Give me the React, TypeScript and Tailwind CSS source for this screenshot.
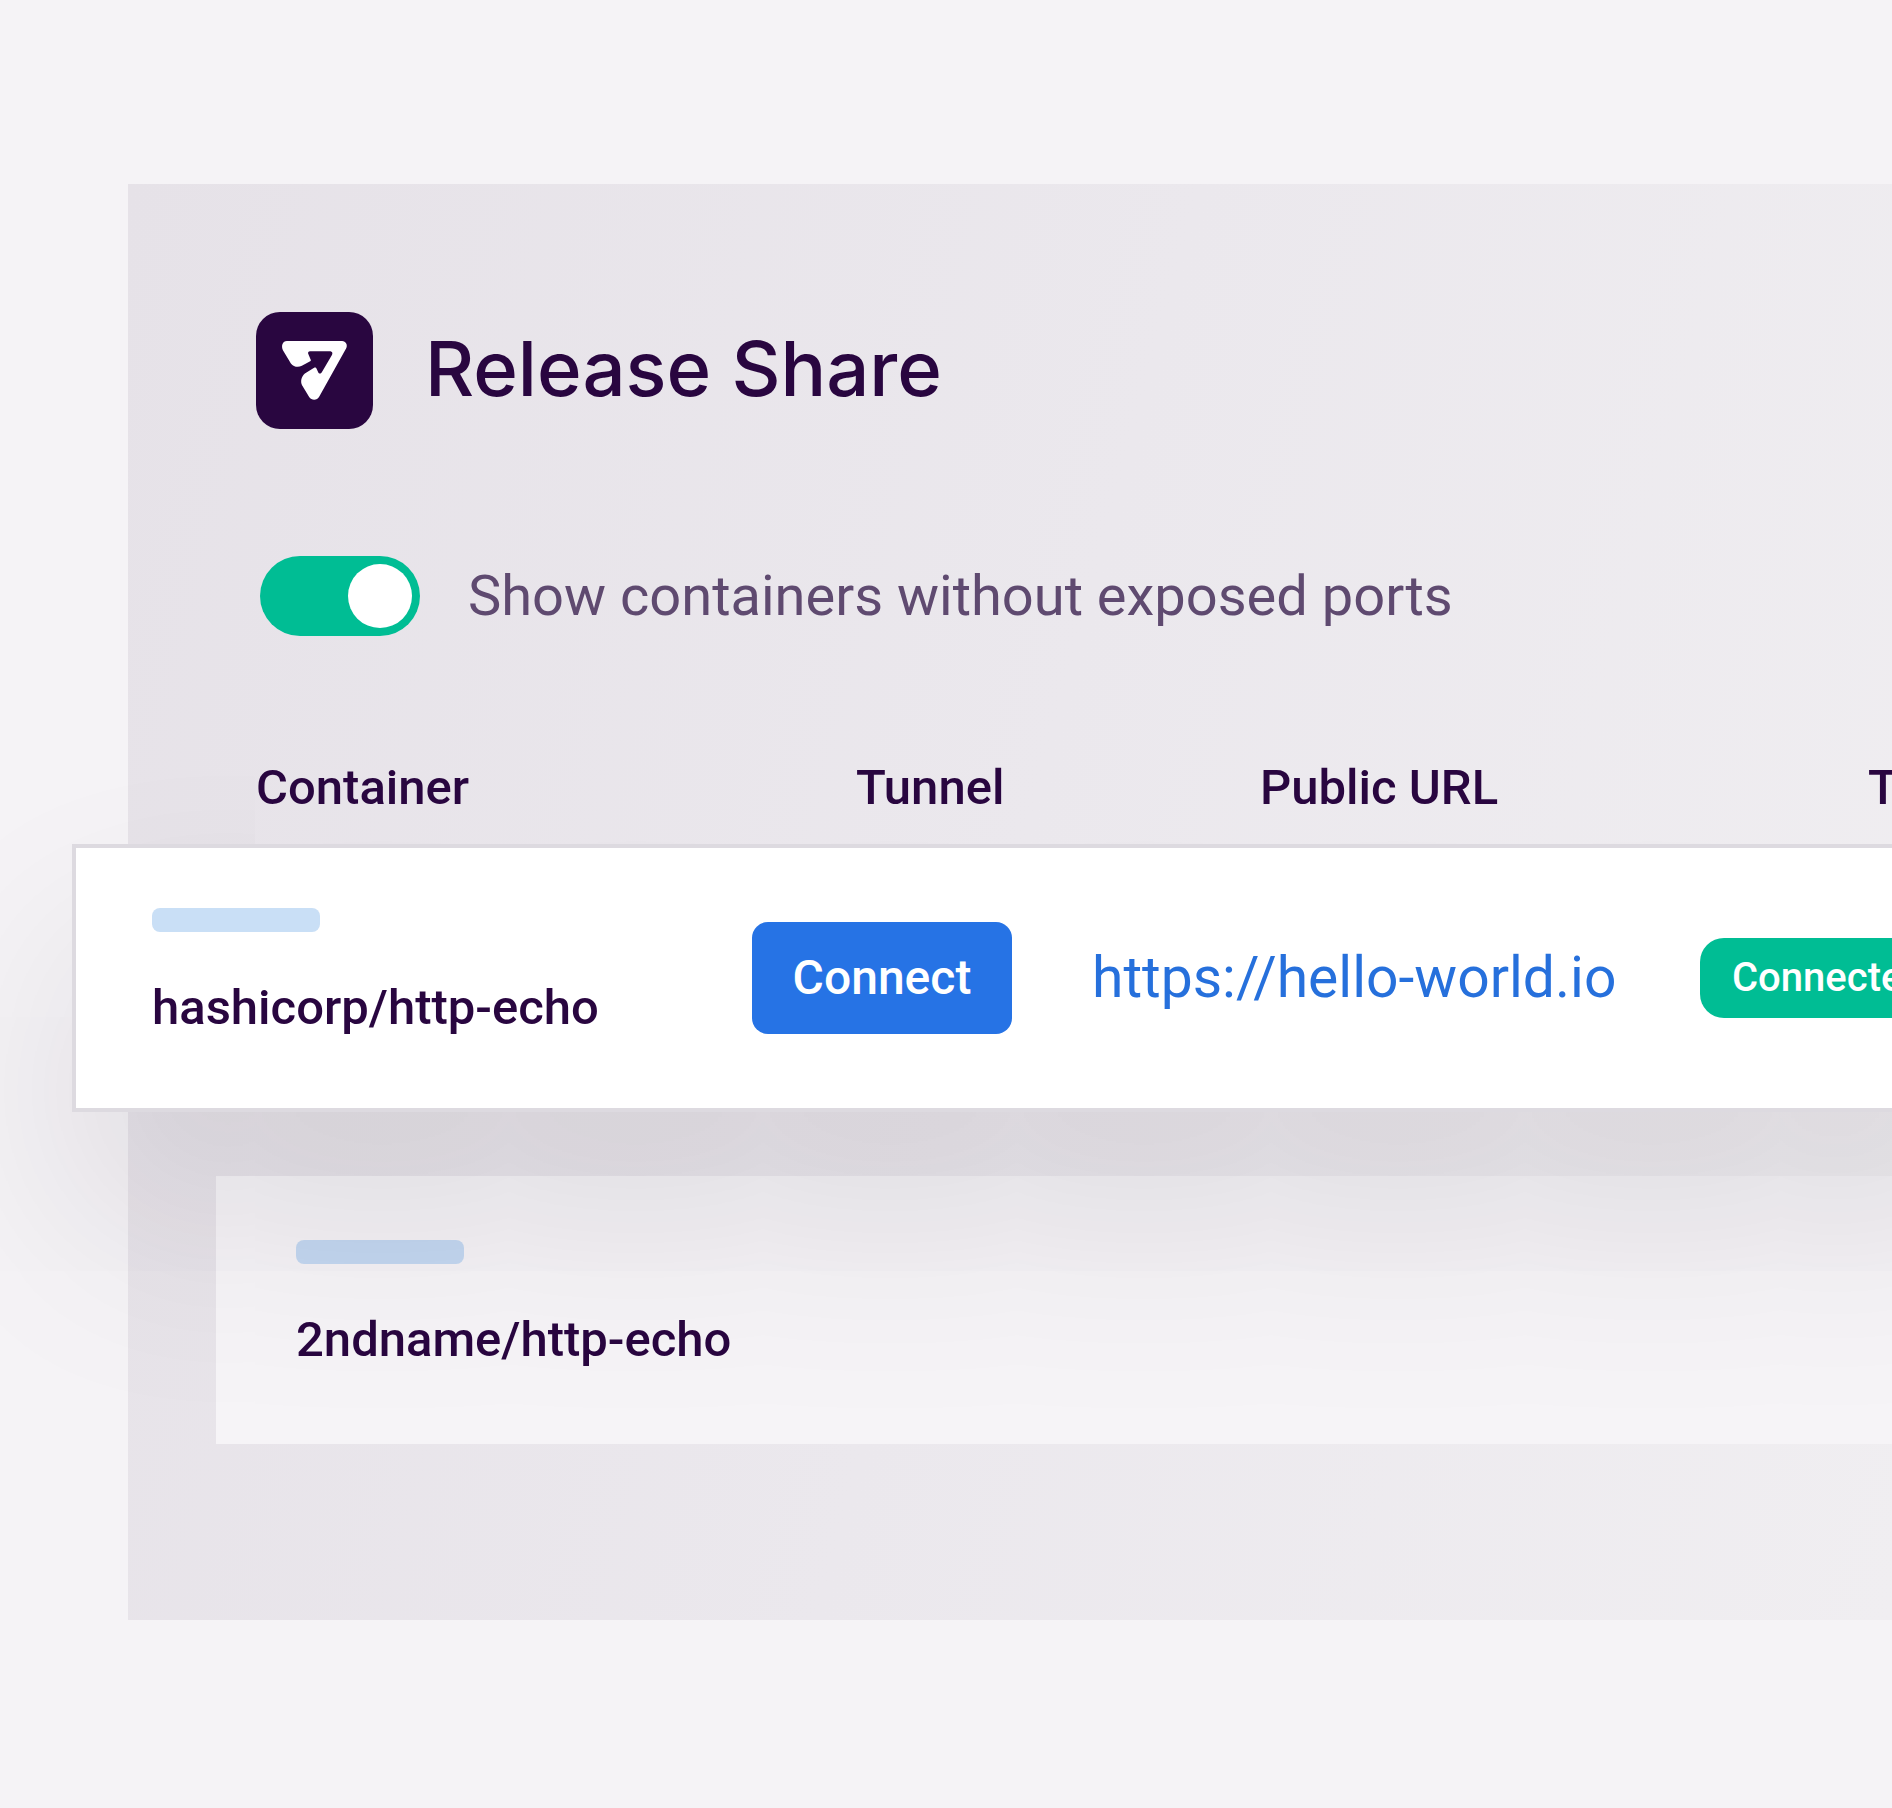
import { useState } from "react";

function Logo() {
  return (
    <svg
      viewBox="48 36 352 352"
      className="size-[117px] shrink-0"
      role="img"
      aria-label="Release logo"
    >
      <rect x="48" y="36" width="352" height="352" rx="72" fill="#290640" />
      <path
        fill="#fff"
        d="M141 123H307C318 123 325 135 319 146L238 291C232 303 215 303 208 292L187 257C181 245 184 231 195 221L224 203C227 202 229 204 230 206L235 217C237 222 243 223 246 217L276 166C280 159 277 154 269 154H211C205 154 203 159 206 164L212 178C214 181 213 183 211 184L186 198C174 204 161 201 153 191L129 151C123 137 128 123 141 123Z"
      />
    </svg>
  );
}

function ContainerCell({ name, bar }: { name: string; bar: string }) {
  return (
    <td className="block pt-[60px] pb-[72px]">
      <div className={`h-6 w-[168px] rounded-lg ${bar}`} />
      <div className="mt-12 text-[49px] leading-[56px] font-medium whitespace-nowrap">
        {name}
      </div>
    </td>
  );
}

export default function App() {
  const [showAll, setShowAll] = useState(true);

  return (
    <main className="min-h-screen overflow-hidden bg-[#f5f3f6] pt-[184px] pb-[188px] font-[Roboto,sans-serif] text-[#290640]">
      <section className="ml-32 bg-linear-[105deg] from-[#e6e2e8] via-[#ebe8ed] to-[#f0eef1] pt-32 pb-[176px]">
        <header className="flex items-start gap-[52px] pl-32">
          <Logo />
          <h1 className="font-[Inter,sans-serif] text-[76px] leading-[112px] font-medium whitespace-nowrap">
            Release Share
          </h1>
        </header>

        <label className="mt-[127px] ml-[132px] flex items-center gap-12">
          <input
            type="checkbox"
            role="switch"
            checked={showAll}
            onChange={(e) => setShowAll(e.target.checked)}
            className="h-20 w-40 shrink-0 appearance-none rounded-full bg-[#aaa3b0] p-2 before:block before:size-16 before:rounded-full before:bg-white checked:bg-[#00bd94] checked:before:ml-auto"
          />
          <span className="text-[56px] leading-[64px] whitespace-nowrap text-[#5f4a70]">
            Show containers without exposed ports
          </span>
        </label>

        <table className="mt-[124px] block">
          <thead className="block pl-32">
            <tr className="grid grid-cols-[600px_404px_608px_auto] text-left text-[49px] leading-[56px]">
              <th className="font-medium">Container</th>
              <th className="font-medium">Tunnel</th>
              <th className="font-medium">Public URL</th>
              <th className="font-medium">Type</th>
            </tr>
          </thead>
          <tbody className="block">
            <tr className="relative z-10 mt-7 -mr-64 -ml-14 grid grid-cols-[600px_340px_608px_auto] items-center border-4 border-[#dddae0] bg-white pl-[76px] shadow-[0_112px_216px_rgba(24,16,36,0.11)]">
              <ContainerCell name="hashicorp/http-echo" bar="bg-[#c9dff6]" />
              <td className="block">
                <button
                  type="button"
                  className="block h-28 w-[260px] rounded-2xl bg-[#2673e5] text-[48px] leading-[56px] font-medium text-white"
                >
                  Connect
                </button>
              </td>
              <td className="block">
                <a
                  href="https://hello-world.io"
                  className="text-[57px] leading-[64px] whitespace-nowrap text-[#2670dc]"
                >
                  https://hello-world.io
                </a>
              </td>
              <td className="block">
                <span className="flex h-20 w-max items-center rounded-3xl bg-[#00bd94] px-8 text-[40px] leading-[48px] font-medium text-white">
                  Connected
                </span>
              </td>
            </tr>
            <tr className="mt-16 ml-[88px] block border-y-4 border-[#f6f4f7] bg-[#f6f4f7] pl-20">
              <ContainerCell name="2ndname/http-echo" bar="bg-[#c4d9f2]" />
            </tr>
          </tbody>
        </table>
      </section>
    </main>
  );
}
